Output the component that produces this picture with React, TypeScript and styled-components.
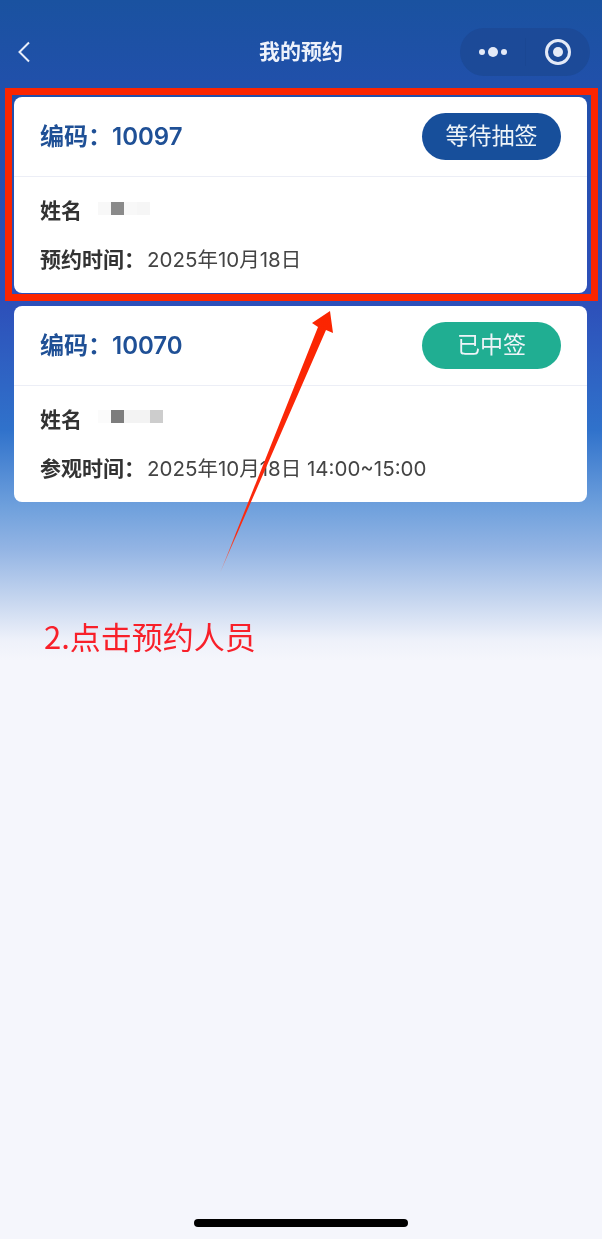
import styled, { createGlobalStyle } from "styled-components";

const GlobalStyle = createGlobalStyle`
  html, body {
    margin: 0;
    padding: 0;
    background: #f5f6fc;
  }
  * {
    box-sizing: border-box;
  }
`;

const Page = styled.div`
  position: relative;
  width: 602px;
  height: 1239px;
  overflow: hidden;
  padding: 0 15px 0 14px;
  font-family: "Inter", "Noto Sans CJK SC", sans-serif;
  filter: blur(0.35px);
  background: linear-gradient(
    180deg,
    #1a52a0 0px,
    #2150ab 90px,
    #2d4fb9 300px,
    #3072cb 430px,
    #6d9fdc 505px,
    #94b5e4 550px,
    #c6d6ef 600px,
    #eef1fa 640px,
    #f5f6fc 660px
  );
`;

const NavBar = styled.header`
  height: 97px;
  padding-top: 28px;
  display: flex;
  align-items: flex-start;
  justify-content: space-between;
`;

const BackButton = styled.button`
  width: 24px;
  height: 48px;
  margin-left: 3px;
  padding: 0;
  border: none;
  background: transparent;
  display: flex;
  align-items: center;
  color: #e8eefa;
`;

const NavTitle = styled.h1`
  position: absolute;
  left: 0;
  right: 0;
  top: 28px;
  margin: 0;
  line-height: 48px;
  text-align: center;
  font-size: 21px;
  font-weight: 700;
  color: #eef2fb;
`;

const Capsule = styled.div`
  width: 130px;
  height: 48px;
  margin-right: -3px;
  border-radius: 24px;
  background: #1c4a98;
  display: flex;
  align-items: center;
`;

const CapsuleSlot = styled.div`
  flex: 1;
  height: 100%;
  display: flex;
  align-items: center;
  justify-content: center;
  color: #e4eaf7;

  & + & {
    background: linear-gradient(#1a4793, #1a4793) left center / 1px 28px no-repeat;
  }
`;

const List = styled.main`
  display: flex;
  flex-direction: column;
  gap: 13px;
`;

const Card = styled.section`
  background: #ffffff;
  border-radius: 8px;
  height: 196px;
`;

const CardHead = styled.div`
  height: 80px;
  padding: 0 26px 4px;
  display: flex;
  align-items: center;
  justify-content: space-between;
  border-bottom: 1px solid #eceef6;
`;

const Code = styled.div`
  font-size: 24px;
  font-weight: 600;
  color: #1f5096;
  word-spacing: 1px;
`;

const StatusPill = styled.div<{ $tone: "wait" | "won" }>`
  width: 139px;
  height: 47px;
  border-radius: 24px;
  margin-top: 4px;
  padding-bottom: 5px;
  display: flex;
  align-items: center;
  justify-content: center;
  font-size: 23px;
  color: #eef4f8;
  background: ${({ $tone }) => ($tone === "wait" ? "#174f9b" : "#20ae92")};
`;

const CardBody = styled.div`
  padding: 17px 26px 0;
  display: flex;
  flex-direction: column;
  gap: 19px;
`;

const Row = styled.div`
  height: 30px;
  display: flex;
  align-items: center;
  font-size: 20.5px;
  color: #444444;
`;

const RowLabel = styled.span`
  font-size: 21px;
  font-weight: 700;
  color: #333333;
`;

const RowValue = styled.span`
  margin-left: 2px;
`;

const Mosaic = styled.div<{ $lift: number }>`
  display: flex;
  margin-left: 16px;
  margin-top: ${({ $lift }) => -$lift}px;
`;

const MosaicCell = styled.i<{ $shade: string }>`
  width: 13px;
  height: 13px;
  background: ${({ $shade }) => $shade};
`;

const RedFrame = styled.div`
  position: absolute;
  left: 5px;
  top: 88px;
  width: 593px;
  height: 213px;
  border: 7px solid #fb2500;
  pointer-events: none;
`;

const ArrowLayer = styled.svg`
  position: absolute;
  left: 0;
  top: 0;
  pointer-events: none;
`;

const Caption = styled.div`
  position: absolute;
  left: 44px;
  top: 616px;
  font-family: "Noto Sans CJK SC", sans-serif;
  font-size: 31px;
  line-height: 40px;
  color: #f8202a;
`;

const HomeBar = styled.div`
  position: absolute;
  left: 194px;
  bottom: 12px;
  width: 214px;
  height: 8px;
  border-radius: 4px;
  background: #000000;
`;

type Booking = {
  code: string;
  status: string;
  tone: "wait" | "won";
  mosaic: string[];
  mosaicLift: number;
  timeLabel: string;
  time: string;
};

const bookings: Booking[] = [
  {
    code: "10097",
    status: "等待抽签",
    tone: "wait",
    mosaic: ["#f8f8f8", "#8a8a8a", "#f8f8f8", "#f6f6f6"],
    mosaicLift: 1,
    timeLabel: "预约时间：",
    time: "2025年10月18日",
  },
  {
    code: "10070",
    status: "已中签",
    tone: "won",
    mosaic: ["#fbfbfb", "#7d7d7d", "#f3f3f3", "#f3f3f3", "#cdcdcd"],
    mosaicLift: 3,
    timeLabel: "参观时间：",
    time: "2025年10月18日 14:00~15:00",
  },
];

export default function App() {
  return (
    <Page>
      <GlobalStyle />
      <NavBar>
        <BackButton type="button" aria-label="返回">
          <svg width="14" height="24" viewBox="0 0 14 24" fill="none">
            <path d="M12 2.5 2.5 12 12 21.5" stroke="currentColor" strokeWidth="2" />
          </svg>
        </BackButton>
        <NavTitle>我的预约</NavTitle>
        <Capsule>
          <CapsuleSlot>
            <svg width="32" height="12" viewBox="0 0 32 12" fill="currentColor">
              <circle cx="5" cy="6" r="3" />
              <circle cx="16" cy="6" r="5" />
              <circle cx="27" cy="6" r="3" />
            </svg>
          </CapsuleSlot>
          <CapsuleSlot>
            <svg width="28" height="28" viewBox="0 0 28 28" fill="none">
              <circle cx="14" cy="14" r="11.5" stroke="currentColor" strokeWidth="3" />
              <circle cx="14" cy="14" r="5" fill="currentColor" />
            </svg>
          </CapsuleSlot>
        </Capsule>
      </NavBar>
      <List>
        {bookings.map((item) => (
          <Card key={item.code}>
            <CardHead>
              <Code>编码：{item.code}</Code>
              <StatusPill $tone={item.tone}>{item.status}</StatusPill>
            </CardHead>
            <CardBody>
              <Row>
                <RowLabel>姓名</RowLabel>
                <Mosaic $lift={item.mosaicLift}>
                  {item.mosaic.map((shade, i) => (
                    <MosaicCell key={i} $shade={shade} />
                  ))}
                </Mosaic>
              </Row>
              <Row>
                <RowLabel>{item.timeLabel}</RowLabel>
                <RowValue>{item.time}</RowValue>
              </Row>
            </CardBody>
          </Card>
        ))}
      </List>
      <RedFrame />
      <ArrowLayer width="602" height="1239" viewBox="0 0 602 1239">
        <defs>
          <linearGradient id="arrowFill" x1="330" y1="311" x2="220" y2="573" gradientUnits="userSpaceOnUse">
            <stop offset="0" stopColor="#fb2500" />
            <stop offset="0.85" stopColor="#fb2a10" />
            <stop offset="1" stopColor="#f46a50" stopOpacity="0.6" />
          </linearGradient>
        </defs>
        <polygon points="330,311 333,333 326,330 220,573 318,327 312,323" fill="url(#arrowFill)" />
      </ArrowLayer>
      <Caption>2.点击预约人员</Caption>
      <HomeBar />
    </Page>
  );
}
